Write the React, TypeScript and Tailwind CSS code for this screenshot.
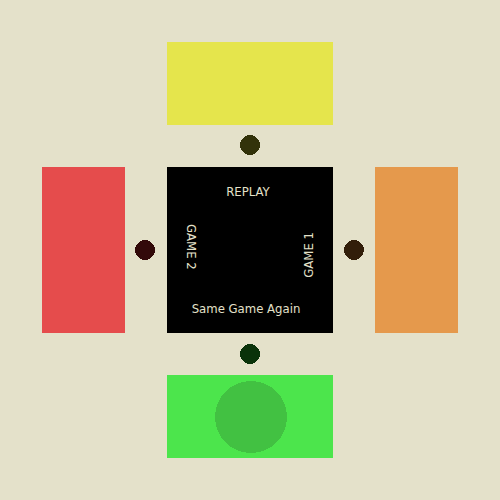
import React from "react";

function Light({ color }: { color: string }) {
  return (
    <svg className={`size-5 ${color}`} viewBox="0 0 20 20" fill="currentColor" shapeRendering="crispEdges" aria-hidden="true">
      <circle cx="10" cy="10" r="10" />
    </svg>
  );
}

export default function App() {
  return (
    <div className="min-h-screen bg-[#e4e1ca]">
      <main className="grid aspect-square w-full grid-cols-[1fr_2fr_1fr_4fr_1fr_2fr_1fr] grid-rows-[1fr_2fr_1fr_4fr_1fr_2fr_1fr] font-['DejaVu_Sans_Condensed','DejaVu_Sans',sans-serif] text-[13px] leading-4 text-[#e4e1ca]">
        <button type="button" aria-labelledby="top-label" className="col-start-4 row-start-2 bg-[#e5e54c]" />
        <div className="col-start-4 row-start-3 flex items-start justify-center pt-[10px]">
          <Light color="text-[#32320a]" />
        </div>

        <button type="button" aria-labelledby="left-label" className="col-start-2 row-start-4 bg-[#e54c4c]" />
        <div className="col-start-3 row-start-4 flex items-center justify-start pl-[10px]">
          <Light color="text-[#320a0a]" />
        </div>

        <section className="col-start-4 row-start-4 flex flex-col bg-black py-4">
          <p id="top-label" className="pt-px pr-1 text-center">REPLAY</p>
          <div className="flex flex-1 justify-between px-4">
            <p id="left-label" className="self-start pt-6 [writing-mode:vertical-rl]">GAME 2</p>
            <p id="right-label" className="rotate-180 self-end pt-6 [writing-mode:vertical-rl]">GAME 1</p>
          </div>
          <p id="bottom-label" className="pr-2 text-center">Same Game Again</p>
        </section>

        <div className="col-start-5 row-start-4 flex items-center justify-center">
          <Light color="text-[#321e0a]" />
        </div>
        <button type="button" aria-labelledby="right-label" className="col-start-6 row-start-4 bg-[#e5994c]" />

        <div className="col-start-4 row-start-5 flex items-center justify-center">
          <Light color="text-[#0a320a]" />
        </div>
        <button type="button" aria-labelledby="bottom-label" className="col-start-4 row-start-6 flex items-center justify-center bg-[#4ce54c] pl-0.5">
          <svg className="size-18 text-[#42c142]" viewBox="0 0 72 72" fill="currentColor" shapeRendering="crispEdges" aria-hidden="true">
            <circle cx="36" cy="36" r="36" />
          </svg>
        </button>
      </main>
    </div>
  );
}
